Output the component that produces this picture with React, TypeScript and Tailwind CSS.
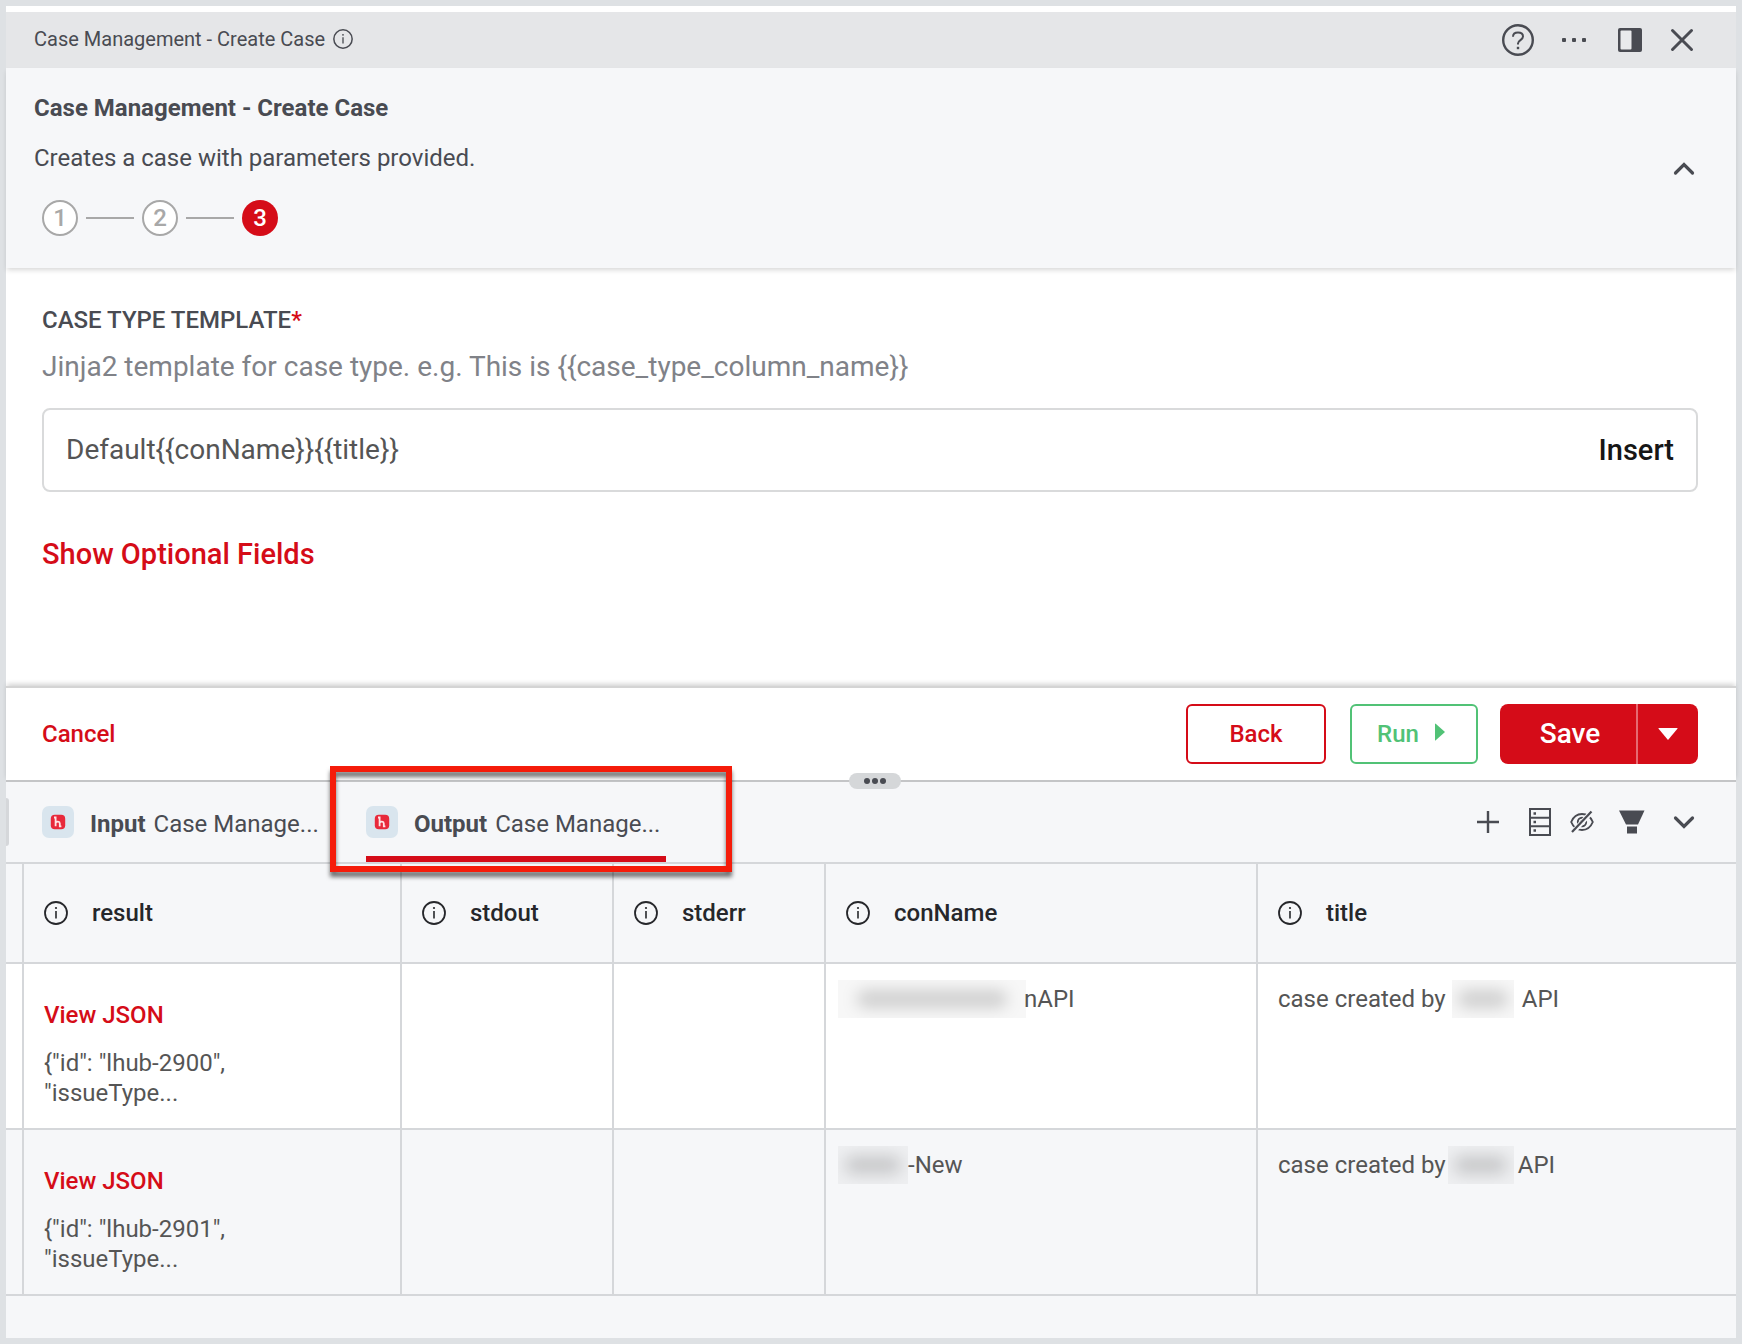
import React, { useState } from "react";

interface Row {
  id: string;
  json: string;
  conName: React.ReactNode;
  title: React.ReactNode;
}

function InfoIcon({ className }: { className: string }) {
  return (
    <svg viewBox="0 0 24 24" fill="none" stroke="currentColor" className={className} aria-hidden="true">
      <circle cx="12" cy="12" r="11" strokeWidth="1.8" />
      <path d="M12 10v7.5" strokeWidth="1.6" />
      <circle cx="12" cy="7" r="1.1" fill="currentColor" stroke="none" />
    </svg>
  );
}

function Logo() {
  return (
    <svg viewBox="0 0 32 32" className="size-8 shrink-0" aria-hidden="true">
      <rect width="32" height="32" rx="7" fill="#d9e5ee" />
      <rect x="8.800" y="8.800" width="14.400" height="14.400" rx="4" fill="#e8293b" />
      <path
        d="M12 11.500h1.600v8.800M13.800 16.600c.6-1.200 4-1.400 4 .8v2.900h1.600"
        fill="none"
        stroke="#ffe3e5"
        strokeWidth="1.8"
      />
    </svg>
  );
}

function Redacted({ className }: { className: string }) {
  return (
    <span className={`relative inline-flex shrink-0 items-center justify-center overflow-hidden bg-black/3 ${className}`}>
      <span className="h-4 w-4/5 rounded-full bg-black/18 blur-[8px]" />
    </span>
  );
}

const rows: Row[] = [
  {
    id: "lhub-2900",
    json: '{"id": "lhub-2900", "issueType...',
    conName: (
      <>
        <Redacted className="-my-1 -ml-2 h-[38px] w-[188px]" />
        <span className="-ml-0.5">nAPI</span>
      </>
    ),
    title: (
      <>
        case created by
        <Redacted className="-my-1 ml-1.5 mr-2 h-[38px] w-[62px]" />
        API
      </>
    ),
  },
  {
    id: "lhub-2901",
    json: '{"id": "lhub-2901", "issueType...',
    conName: (
      <>
        <Redacted className="-my-1 -ml-2 h-[38px] w-[70px]" />
        -New
      </>
    ),
    title: (
      <>
        case created by
        <Redacted className="-my-1 ml-0.5 mr-1 h-[38px] w-[66px]" />
        API
      </>
    ),
  },
];

const columns = ["result", "stdout", "stderr", "conName", "title"];

function Steps() {
  return (
    <ol className="mt-[27px] flex items-center gap-2 pl-2 text-2xl font-medium">
      <li className="flex size-9 items-center justify-center rounded-full border-2 border-[#a8a8a8] bg-white text-[#a8a8a8]">
        1
      </li>
      <li className="h-0.5 w-12 bg-[#a8a8a8]" aria-hidden="true" />
      <li className="flex size-9 items-center justify-center rounded-full border-2 border-[#a8a8a8] bg-white text-[#a8a8a8]">
        2
      </li>
      <li className="h-0.5 w-12 bg-[#a8a8a8]" aria-hidden="true" />
      <li className="flex size-9 items-center justify-center rounded-full bg-[#d50c18] text-white">3</li>
    </ol>
  );
}

function App() {
  const [template, setTemplate] = useState("Default{{conName}}{{title}}");

  return (
    <div className="flex min-h-screen flex-col border-6 border-[#dee1e4] bg-white pt-1.5 font-[Roboto,sans-serif] text-[#494b52]">
      {/* Title bar */}
      <div className="flex h-14 items-center justify-between bg-[#e5e6e8] pl-7 pr-[42px]">
        <div className="flex items-center gap-2 pb-0.5 text-xl">
          Case Management - Create Case
          <InfoIcon className="size-5" />
        </div>
        <div className="flex items-center gap-7">
          <button aria-label="Help">
            <svg viewBox="0 0 32 32" fill="none" stroke="currentColor" className="size-8">
              <circle cx="16" cy="16" r="14.800" strokeWidth="2.400" />
              <path
                d="M11 12.800c0-2.800 2.200-4.300 5-4.300s5 1.500 5 4c0 3.600-5 3.600-5 7v1"
                strokeWidth="2"
              />
              <rect x="14.800" y="22.800" width="2.400" height="2.400" fill="currentColor" stroke="none" />
            </svg>
          </button>
          <button aria-label="More">
            <svg viewBox="0 0 28 24" fill="currentColor" className="h-6 w-7">
              <rect x="0" y="10" width="4" height="4" rx="1" />
              <rect x="10" y="10" width="4" height="4" rx="1" />
              <rect x="20" y="10" width="4" height="4" rx="1" />
            </svg>
          </button>
          <button aria-label="Dock panel">
            <svg viewBox="0 0 24 24" className="size-6">
              <rect width="24" height="24" rx="2" fill="currentColor" />
              <rect x="2.500" y="2.500" width="11" height="19" rx="1" fill="#e9eaec" />
            </svg>
          </button>
          <button aria-label="Close">
            <svg viewBox="0 0 24 24" fill="none" stroke="currentColor" strokeWidth="3" strokeLinecap="round" className="size-6">
              <path d="M2.500 2.500l19 19M21.500 2.500l-19 19" />
            </svg>
          </button>
        </div>
      </div>

      {/* Step header */}
      <header className="flex items-center justify-between bg-[#f6f7f9] pb-8 pl-7 pr-10 pt-[25px] shadow-[0_3px_5px_-1px_rgba(0,0,0,0.16)]">
        <div>
          <h1 className="text-2xl/[30px] font-bold">Case Management - Create Case</h1>
          <p className="mt-5 text-2xl/[30px]">Creates a case with parameters provided.</p>
          <Steps />
        </div>
        <button aria-label="Collapse" className="pt-2">
          <svg viewBox="0 0 24 24" fill="none" stroke="currentColor" strokeWidth="3.200" strokeLinecap="round" className="size-6">
            <path d="M3.500 16l8.500-8.500 8.500 8.500" />
          </svg>
        </button>
      </header>

      {/* Form */}
      <div className="pb-[114px] pl-9 pr-[38px] pt-[37px]">
        <label htmlFor="case-type" className="block text-2xl/[30px] font-medium">
          CASE TYPE TEMPLATE<span className="text-[#d50c18]">*</span>
        </label>
        <p className="mt-3.5 text-[28px]/9 text-[#808288]">
          {"Jinja2 template for case type. e.g. This is {{case_type_column_name}}"}
        </p>
        <div className="mt-[23px] flex h-[84px] items-center rounded-lg border-2 border-[#d9dadb] px-[22px]">
          <input
            id="case-type"
            value={template}
            onChange={(e) => setTemplate(e.target.value)}
            className="min-w-0 flex-1 text-[28px]/9 text-[#555] outline-none"
          />
          <button className="text-[29px]/9 font-medium text-[#161616]">Insert</button>
        </div>
        <button className="mt-11 block text-[29px]/9 font-medium text-[#d50c18]">Show Optional Fields</button>
      </div>

      {/* Actions */}
      <div className="relative flex h-24 items-center justify-between border-y-2 border-t-[#d4d4d4] border-b-[#c4c5c7] bg-white pl-9 pr-[38px] shadow-[0_-3px_5px_-1px_rgba(0,0,0,0.18)]">
        <button className="text-2xl font-medium text-[#d50c18]">Cancel</button>
        <div className="flex items-center">
          <button className="mr-6 h-15 w-[140px] rounded-md border-2 border-[#d50c18] text-2xl font-medium text-[#d50c18]">
            Back
          </button>
          <button className="mr-[22px] flex h-15 w-32 items-center justify-center gap-4 rounded-md border-2 border-[#51c276] pr-1.5 text-2xl font-medium text-[#51c276]">
            Run
            <svg viewBox="0 0 10 18" fill="currentColor" className="mb-1 h-[18px] w-2.5">
              <path d="M0 1Q0 0 1 1L10 9L1 17Q0 18 0 17z" />
            </svg>
          </button>
          <div className="flex h-15 overflow-hidden rounded-lg bg-[#d50c18] text-white">
            <button className="w-[138px] border-r-2 border-[#e66a72] pl-1 text-[28px] font-medium">Save</button>
            <button aria-label="More save options" className="flex w-15 items-center justify-center">
              <svg viewBox="0 0 20 12" fill="currentColor" className="h-3 w-5">
                <path d="M1 0h18q1 0 .4.800L10 12L.6.800Q0 0 1 0z" />
              </svg>
            </button>
          </div>
        </div>
        <button
          aria-label="Resize"
          className="absolute -bottom-[9px] left-1/2 z-10 flex h-4 w-13 -translate-x-[22px] items-center justify-center gap-0.5 rounded-full bg-[#d5d7d9]"
        >
          <span className="size-1.5 rounded-full bg-[#494b52]" />
          <span className="size-1.5 rounded-full bg-[#494b52]" />
          <span className="size-1.5 rounded-full bg-[#494b52]" />
        </button>
      </div>

      {/* Tabs */}
      <div className="relative flex h-[82px] items-center justify-between border-b-2 border-[#d5d7da] bg-[#f6f7f9] pr-10">
        <div className="flex h-full items-center">
          <span className="mr-[33px] h-12 w-[3px] rounded-r-lg bg-[#d5d7da]" />
          <button className="mr-6 flex h-full w-[300px] items-center gap-4 text-2xl whitespace-nowrap">
            <Logo />
            <span className="flex gap-2 pt-1">
              <b>Input</b> Case Manage...
            </span>
          </button>
          <div className="relative h-full w-[300px]">
            <button className="flex h-full w-full items-center gap-4 border-b-6 border-[#d50c18] pt-1.5 text-2xl whitespace-nowrap">
              <Logo />
              <span className="flex gap-2 pt-1">
                <b>Output</b> Case Manage...
              </span>
            </button>
            {/* Callout frame */}
            <div className="pointer-events-none absolute -left-9 -top-4 z-20 h-[106px] w-[402px] border-6 border-[#f51c0a] drop-shadow-[0_5px_2px_rgba(0,0,0,0.55)]" />
          </div>
        </div>
        <div className="flex items-center">
          <button aria-label="Add" className="mr-7">
            <svg viewBox="0 0 24 24" fill="none" stroke="currentColor" strokeWidth="2.400" className="size-6">
              <path d="M12 1v22M1 12h22" />
            </svg>
          </button>
          <button aria-label="Rows" className="mr-[18px]">
            <svg viewBox="0 0 24 28" fill="none" stroke="currentColor" strokeWidth="2" className="h-7 w-6">
              <path d="M2 1h20v26H2zM2 9.700h20M2 18.300h20" />
              <path d="M5.500 5.500h2.500M5.500 14h2.500M5.500 22.500h2.500" strokeWidth="2.500" />
            </svg>
          </button>
          <button aria-label="Hidden columns" className="mr-6">
            <svg viewBox="0 0 24 24" fill="none" stroke="currentColor" strokeWidth="1.900" className="size-6">
              <path d="M1.200 12C3.500 6.500 7.500 4 12 4s8.500 2.500 10.800 8C20.500 17.500 16.500 20 12 20S3.500 17.500 1.200 12z" />
              <circle cx="12" cy="12" r="4.200" />
              <circle cx="12" cy="12" r="1.400" />
              <path d="M3 22L21.500 2" stroke="#f6f7f9" strokeWidth="5" />
              <path d="M2 22L21.500 1.500" strokeWidth="2.200" />
            </svg>
          </button>
          <button aria-label="Filter" className="mr-[26px]">
            <svg viewBox="0 0 28 24" fill="currentColor" className="h-6 w-7">
              <path d="M1 0.500h25.500L20 14.500H8z" />
              <rect x="9" y="16.500" width="10" height="7" />
            </svg>
          </button>
          <button aria-label="Expand">
            <svg viewBox="0 0 24 24" fill="none" stroke="currentColor" strokeWidth="3.200" strokeLinecap="round" className="size-6">
              <path d="M3.500 8l8.500 8.500 8.500-8.500" />
            </svg>
          </button>
        </div>
      </div>

      {/* Results */}
      <div className="flex-1 bg-[#f6f7f9]">
        <table className="w-full table-fixed border-separate border-spacing-0 text-left text-2xl/[30px]">
          <colgroup>
            <col className="w-[18px]" />
            <col className="w-[378px]" />
            <col className="w-[212px]" />
            <col className="w-[212px]" />
            <col className="w-[432px]" />
            <col />
          </colgroup>
          <thead>
            <tr className="h-[100px] text-[#26272b]">
              <td className="border-b-2 border-r-2 border-[#d5d7da]" />
              {columns.map((name) => (
                <th key={name} className="border-b-2 border-r-2 border-[#d5d7da] px-5 font-medium last:border-r-0">
                  <span className="flex items-center gap-6">
                    <InfoIcon className="size-6" />
                    {name}
                  </span>
                </th>
              ))}
            </tr>
          </thead>
          <tbody className="align-top text-[#555]">
            {rows.map((row) => (
              <tr key={row.id} className="odd:bg-white">
                <td className="border-b-2 border-r-2 border-[#d5d7da]" />
                <td className="border-b-2 border-r-2 border-[#d5d7da] px-5 pb-5 pt-9">
                  <a href={`#${row.id}`} className="block font-medium text-[#d50c18]">
                    View JSON
                  </a>
                  <p className="mt-[18px] w-56">{row.json}</p>
                </td>
                <td className="border-b-2 border-r-2 border-[#d5d7da]" />
                <td className="border-b-2 border-r-2 border-[#d5d7da]" />
                <td className="border-b-2 border-r-2 border-[#d5d7da] px-5 pt-5">
                  <div className="flex">{row.conName}</div>
                </td>
                <td className="border-b-2 border-[#d5d7da] px-5 pt-5">
                  <div className="flex">{row.title}</div>
                </td>
              </tr>
            ))}
          </tbody>
        </table>
      </div>
    </div>
  );
}

export default App;
